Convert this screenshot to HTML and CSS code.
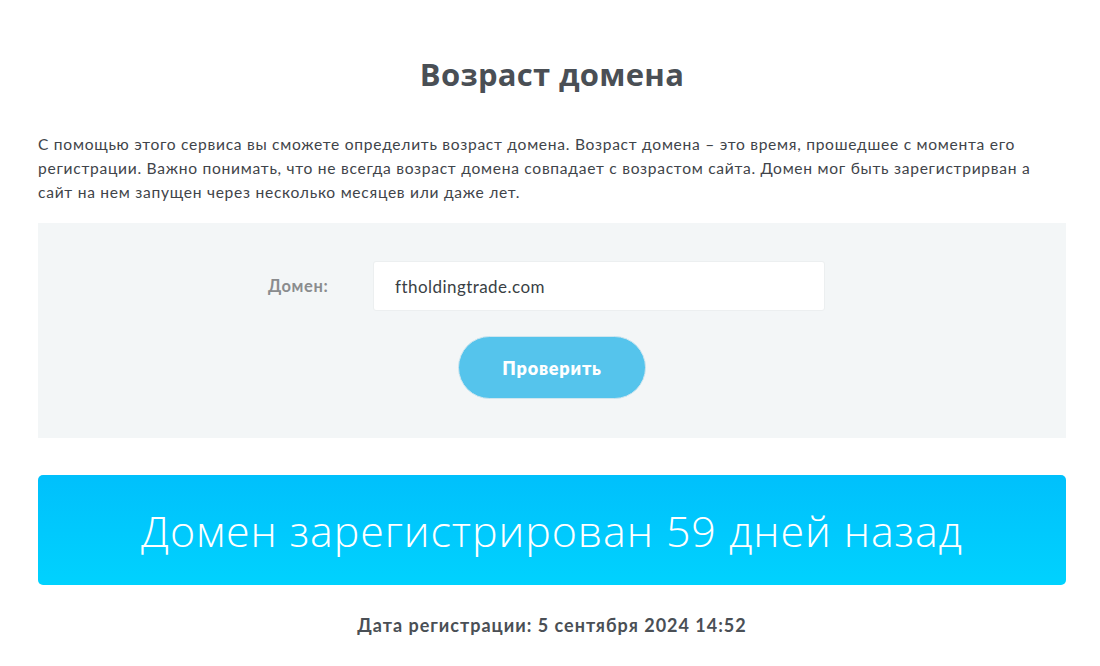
FILE: index.html
```html
<!DOCTYPE html>
<html lang="ru">
<head>
<meta charset="utf-8">
<title>Возраст домена</title>
<link rel="stylesheet" href="styles.css">
</head>
<body>
<div class="container">
  <h1 class="title">Возраст домена</h1>
  <p class="intro">С помощью этого сервиса вы сможете определить возраст домена. Возраст домена – это время, прошедшее с момента его регистрации. Важно понимать, что не всегда возраст домена совпадает с возрастом сайта. Домен мог быть зарегистрирван а сайт на нем запущен через несколько месяцев или даже лет.</p>
  <div class="form-box">
    <div class="form-row">
      <label class="label" for="domain">Домен:</label>
      <input class="input" id="domain" type="text" value="ftholdingtrade.com">
    </div>
    <button class="btn" type="button">Проверить</button>
  </div>
  <div class="result">Домен зарегистрирован 59 дней назад</div>
  <div class="date">Дата регистрации: 5 сентября 2024 14:52</div>
</div>
</body>
</html>
```
FILE: styles.css
```css
html, body {
  margin: 0;
  padding: 0;
  background: #ffffff;
}
body {
  font-family: "Lato", "Liberation Sans", sans-serif;
  color: #3f444a;
}
.container {
  width: 1028px;
  margin-left: 38px;
}
.title {
  margin: 0;
  padding-top: 54px;
  text-align: center;
  font-family: "Open Sans", sans-serif;
  font-weight: 700;
  font-size: 31px;
  line-height: 40px;
  color: #4a4f55;
  letter-spacing: 0.3px;
}
.intro {
  margin: 38px 0 0;
  font-family: "Lato", sans-serif;
  font-size: 15.6px;
  letter-spacing: 0.72px;
  line-height: 24px;
  color: #3f444a;
}
.form-box {
  margin-top: 19px;
  background: #f3f6f7;
  height: 215px;
  box-sizing: border-box;
  padding-top: 38px;
  display: flex;
  flex-direction: column;
  align-items: center;
}
.form-row {
  display: flex;
  align-items: center;
  margin-left: -11px;
}
.label {
  font-family: "Lato", sans-serif;
  font-weight: 700;
  font-size: 16.5px;
  letter-spacing: 0.6px;
  color: #8a8c8e;
  width: 105px;
}
.input {
  width: 452px;
  height: 50px;
  box-sizing: border-box;
  border: 1px solid #eceff0;
  border-radius: 3px;
  background: #fff;
  padding: 0 21px;
  font-family: "Lato", sans-serif;
  font-size: 17px;
  letter-spacing: 0.45px;
  color: #3a3f45;
  outline: none;
}
.btn {
  margin-top: 25px;
  width: 188px;
  height: 63px;
  border: 1px solid #cfe6ef;
  border-radius: 32px;
  background: #55c4ec;
  color: #fff;
  font-family: "Lato", sans-serif;
  font-weight: 800;
  font-size: 18px;
  letter-spacing: 0.8px;
}
.result {
  margin-top: 37px;
  height: 110px;
  border-radius: 5px;
  background: linear-gradient(#00c0fc, #00d2fe);
  color: #fff;
  display: flex;
  align-items: center;
  justify-content: center;
  font-family: "Open Sans", sans-serif;
  font-weight: 300;
  font-size: 43px;
  letter-spacing: 0.9px;
}
.date {
  margin-top: 29px;
  text-align: center;
  font-family: "Lato", sans-serif;
  font-weight: 700;
  font-size: 18px;
  letter-spacing: 1px;
  color: #4a4f55;
}
```
